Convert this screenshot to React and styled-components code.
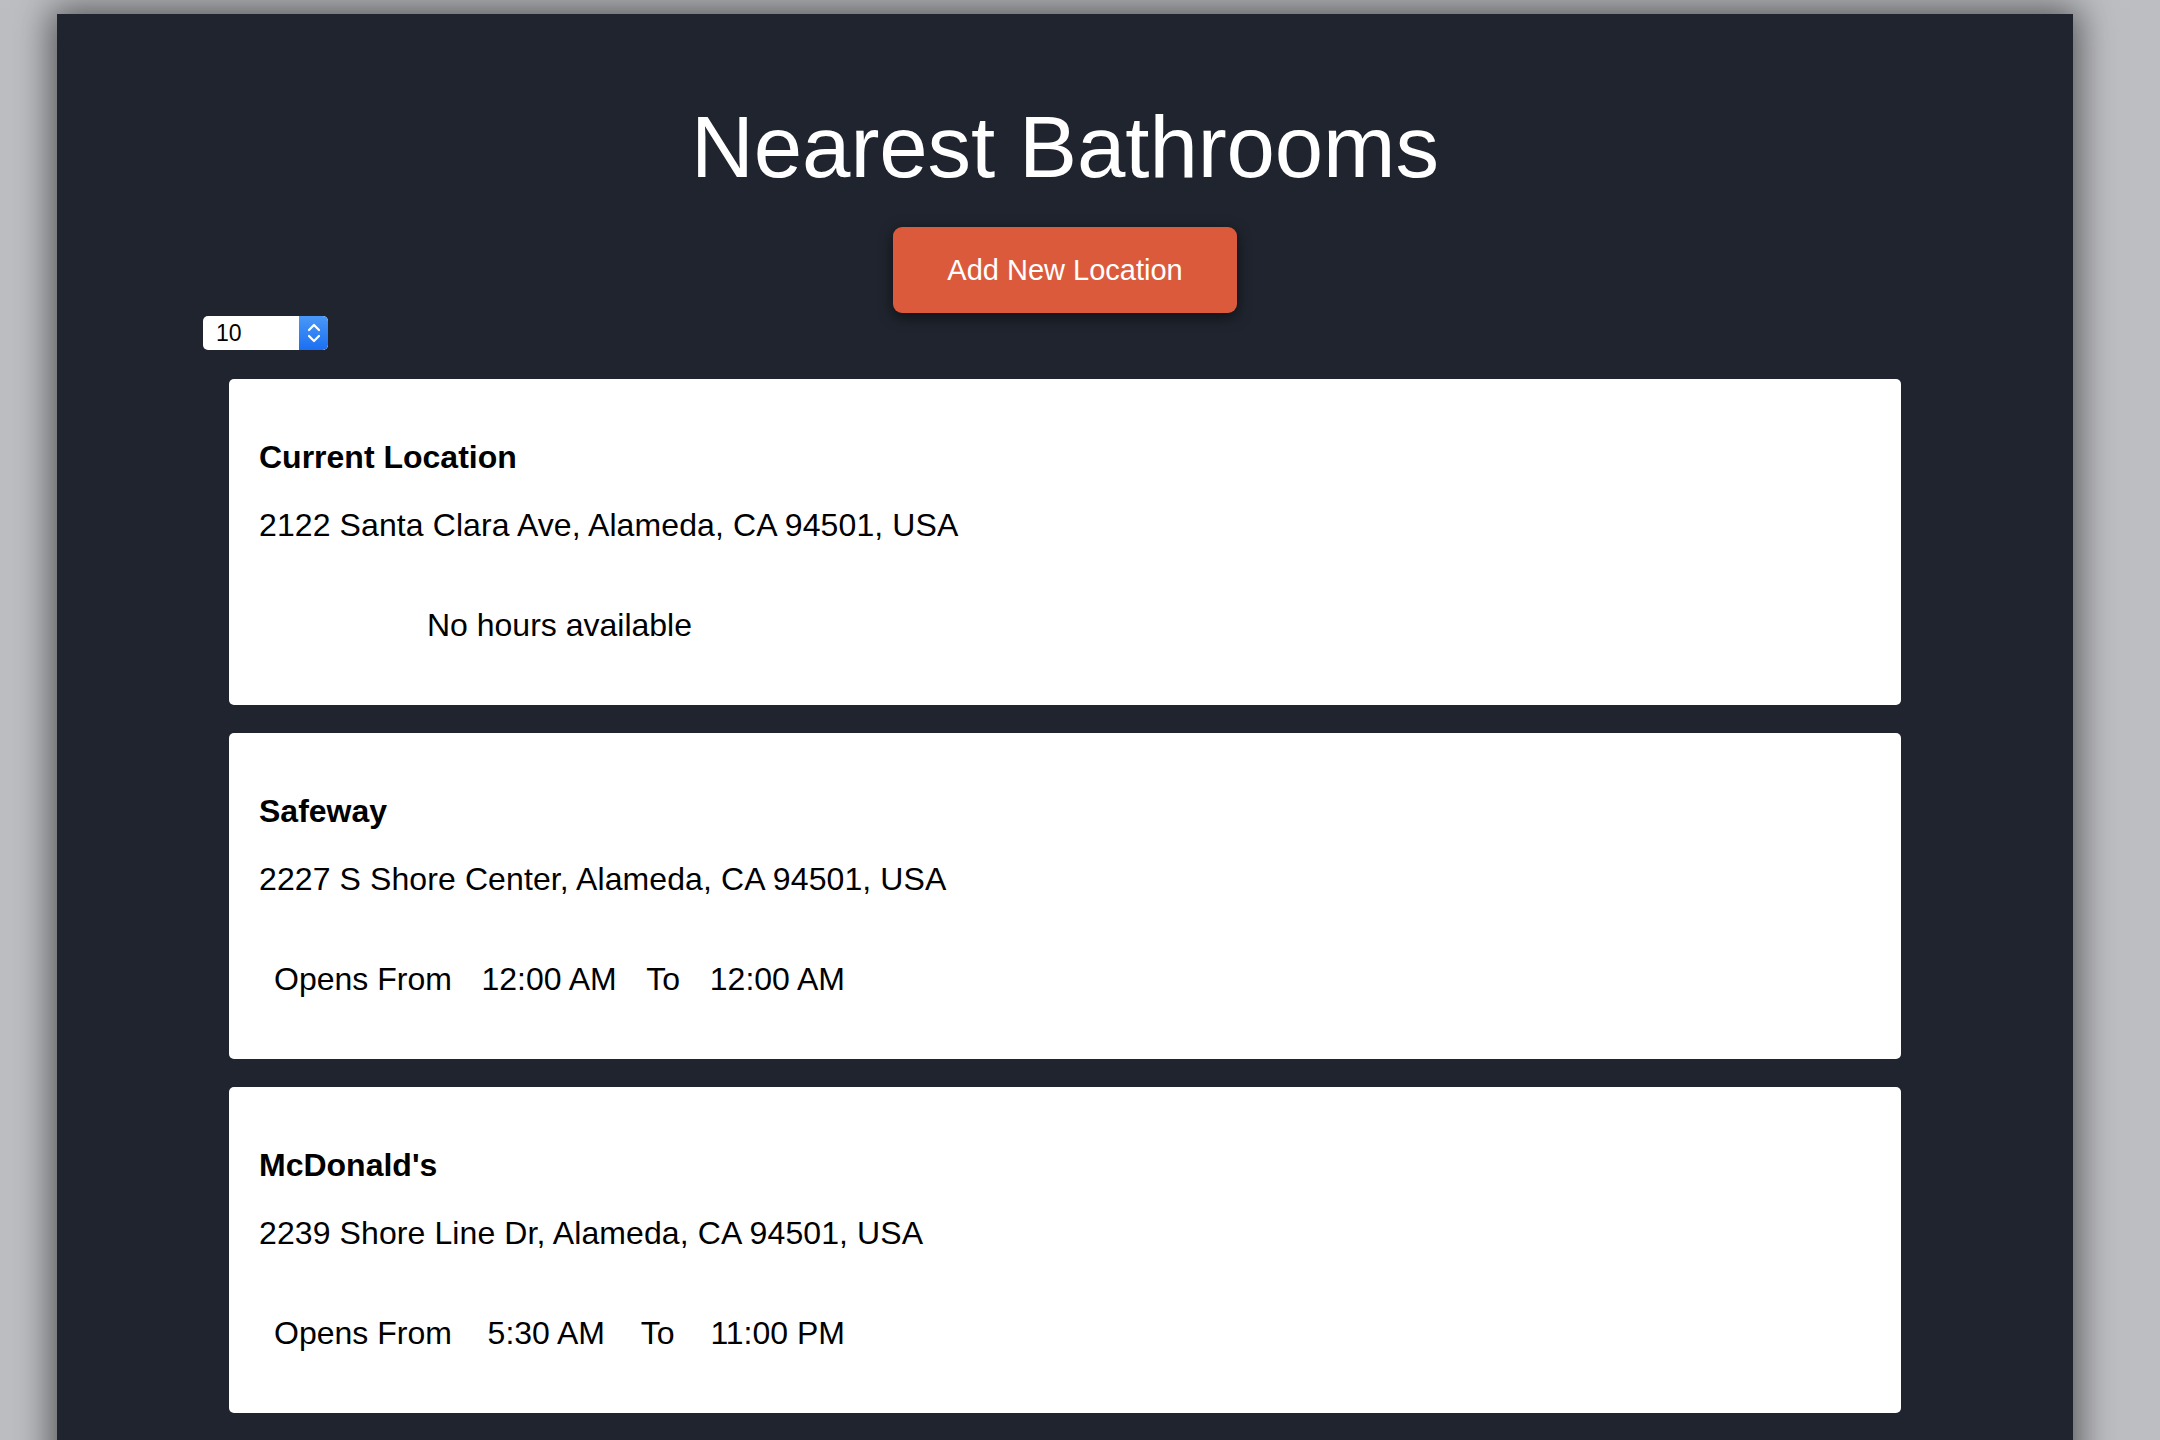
import React from "react";
import styled, { createGlobalStyle } from "styled-components";

const GlobalStyle = createGlobalStyle`
  html, body {
    margin: 0;
    padding: 0;
    background: #bdbec2;
    font-family: "Liberation Sans", Arial, Helvetica, sans-serif;
  }
  #root {
    height: 1440px;
    overflow: hidden;
  }
`;

const Desktop = styled.div`
  height: 1440px;
  overflow: hidden;
  padding: 14px 0 0 57px;
  box-sizing: border-box;
  background: #bdbec2;
`;

const Window = styled.main`
  width: 2016px;
  min-height: 1520px;
  background: #1f242e;
  box-shadow: 0 0 34px 6px rgba(0, 0, 0, 0.55);
  display: flex;
  flex-direction: column;
  padding-top: 83px;
  box-sizing: border-box;
`;

const Title = styled.h1`
  margin: 0;
  text-align: center;
  color: #ffffff;
  font-size: 87px;
  font-weight: 400;
  line-height: 100px;
  letter-spacing: -0.1px;
`;

const ButtonRow = styled.div`
  display: flex;
  justify-content: center;
  margin-top: 30px;
`;

const AddButton = styled.button`
  width: 344px;
  height: 86px;
  border: none;
  border-radius: 9px;
  background: #dc5a3c;
  color: #ffffff;
  font-family: "Liberation Sans", Arial, sans-serif;
  font-size: 29px;
  box-shadow: 0 4px 14px rgba(0, 0, 0, 0.55);
  cursor: pointer;
`;

const FilterRow = styled.div`
  display: flex;
  padding-left: 146px;
  margin-top: 3px;
`;

const SelectBox = styled.div`
  display: flex;
  width: 125px;
  height: 34px;
  border-radius: 5px;
  background: #ffffff;
  overflow: hidden;
`;

const NativeSelect = styled.select`
  appearance: none;
  -webkit-appearance: none;
  flex: 1;
  min-width: 0;
  border: none;
  outline: none;
  background: transparent;
  padding: 0 0 0 13px;
  font-family: "Liberation Sans", Arial, sans-serif;
  font-size: 23px;
  color: #000000;
`;

const Stepper = styled.span`
  width: 29px;
  display: flex;
  align-items: center;
  justify-content: center;
  background: linear-gradient(#4a98f7, #1b6ff2);
  border-radius: 0 5px 5px 0;
`;

const CardList = styled.section`
  display: flex;
  flex-direction: column;
  gap: 28px;
  padding: 0 172px;
  margin-top: 29px;
`;

const Card = styled.article`
  background: #ffffff;
  border-radius: 5px;
  padding: 58px 30px 60px;
  display: flex;
  flex-direction: column;
  color: #000000;
`;

const Name = styled.h4`
  margin: 0;
  font-size: 32px;
  font-weight: 700;
  line-height: 40px;
`;

const Address = styled.p`
  margin: 28px 0 0;
  font-size: 32px;
  line-height: 40px;
  letter-spacing: 0.1px;
`;

const Hours = styled.div`
  margin: 60px 0 0 15px;
  width: 571px;
  display: flex;
  justify-content: ${(p) => (p.$empty ? "center" : "space-between")};
  font-size: 32px;
  line-height: 40px;
`;

const Cell = styled.span`
  white-space: nowrap;
`;

const StepIcon = () => (
  <svg width="16" height="24" viewBox="0 0 16 24" fill="none">
    <path d="M3 9 L8 4 L13 9" stroke="#ffffff" strokeWidth="2.2" strokeLinecap="round" strokeLinejoin="round" />
    <path d="M3 15 L8 20 L13 15" stroke="#ffffff" strokeWidth="2.2" strokeLinecap="round" strokeLinejoin="round" />
  </svg>
);

const locations = [
  { name: "Current Location", address: "2122 Santa Clara Ave, Alameda, CA 94501, USA", hours: null },
  { name: "Safeway", address: "2227 S Shore Center, Alameda, CA 94501, USA", hours: ["12:00 AM", "12:00 AM"] },
  { name: "McDonald's", address: "2239 Shore Line Dr, Alameda, CA 94501, USA", hours: ["5:30 AM", "11:00 PM"] },
];

export default function App() {
  return (
    <>
      <GlobalStyle />
      <Desktop>
        <Window>
          <Title>Nearest Bathrooms</Title>
          <ButtonRow>
            <AddButton>Add New Location</AddButton>
          </ButtonRow>
          <FilterRow>
            <SelectBox>
              <NativeSelect defaultValue="10">
                <option value="5">5</option>
                <option value="10">10</option>
                <option value="20">20</option>
              </NativeSelect>
              <Stepper>
                <StepIcon />
              </Stepper>
            </SelectBox>
          </FilterRow>
          <CardList>
            {locations.map((loc) => (
              <Card key={loc.name}>
                <Name>{loc.name}</Name>
                <Address>{loc.address}</Address>
                {loc.hours ? (
                  <Hours>
                    <Cell>Opens From</Cell>
                    <Cell>{loc.hours[0]}</Cell>
                    <Cell>To</Cell>
                    <Cell>{loc.hours[1]}</Cell>
                  </Hours>
                ) : (
                  <Hours $empty>
                    <Cell>No hours available</Cell>
                  </Hours>
                )}
              </Card>
            ))}
          </CardList>
        </Window>
      </Desktop>
    </>
  );
}
